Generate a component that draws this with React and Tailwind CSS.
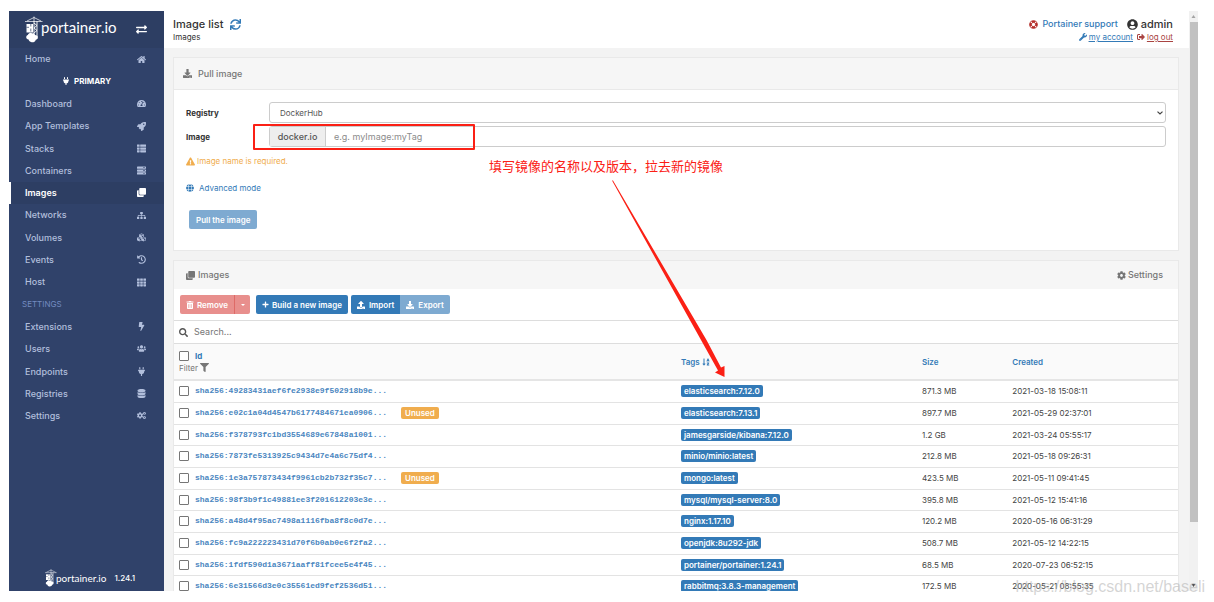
import React, { useState } from 'react';
import {
  FaBolt, FaClone, FaCog, FaCogs, FaCubes, FaDatabase, FaDownload, FaExchangeAlt,
  FaExclamationTriangle, FaFilter, FaGlobe, FaHistory, FaHome, FaLifeRing, FaPlug, FaPlus,
  FaRocket, FaSearch, FaServer, FaSignOutAlt, FaSitemap, FaSortAlphaDown, FaSync,
  FaTachometerAlt, FaTh, FaThList, FaTrashAlt, FaUpload, FaUserCircle, FaUsers, FaWrench,
} from 'react-icons/fa';

const MENU = [
  { label: 'Home', icon: FaHome },
  { label: 'PRIMARY', type: 'endpoint' },
  { label: 'Dashboard', icon: FaTachometerAlt },
  { label: 'App Templates', icon: FaRocket },
  { label: 'Stacks', icon: FaThList },
  { label: 'Containers', icon: FaServer },
  { label: 'Images', icon: FaClone, active: true },
  { label: 'Networks', icon: FaSitemap },
  { label: 'Volumes', icon: FaCubes },
  { label: 'Events', icon: FaHistory },
  { label: 'Host', icon: FaTh },
  { label: 'SETTINGS', type: 'title' },
  { label: 'Extensions', icon: FaBolt },
  { label: 'Users', icon: FaUsers },
  { label: 'Endpoints', icon: FaPlug },
  { label: 'Registries', icon: FaDatabase },
  { label: 'Settings', icon: FaCogs },
];

const IMAGES = [
  { id: 'sha256:49283431aef6fe2938e9f502918b9e...', tag: 'elasticsearch:7.12.0', size: '871.3 MB', created: '2021-03-18 15:08:11' },
  { id: 'sha256:e02c1a04d4547b6177484671ea0906...', tag: 'elasticsearch:7.13.1', size: '897.7 MB', created: '2021-05-29 02:37:01', unused: true },
  { id: 'sha256:f378793fc1bd3554689e67848a1001...', tag: 'jamesgarside/kibana:7.12.0', size: '1.2 GB', created: '2021-03-24 05:55:17' },
  { id: 'sha256:7873fe5313925c9434d7e4a6c75df4...', tag: 'minio/minio:latest', size: '212.8 MB', created: '2021-05-18 09:26:31' },
  { id: 'sha256:1e3a757873434f9961cb2b732f35c7...', tag: 'mongo:latest', size: '423.5 MB', created: '2021-05-11 09:41:45', unused: true },
  { id: 'sha256:98f3b9f1c49881ee3f201612203e3e...', tag: 'mysql/mysql-server:8.0', size: '395.8 MB', created: '2021-05-12 15:41:16' },
  { id: 'sha256:a48d4f95ac7498a1116fba8f8c0d7e...', tag: 'nginx:1.17.10', size: '120.2 MB', created: '2020-05-16 06:31:29' },
  { id: 'sha256:fc9a222223431d70f6b0ab0e6f2fa2...', tag: 'openjdk:8u292-jdk', size: '508.7 MB', created: '2021-05-12 14:22:15' },
  { id: 'sha256:1fdf590d1a3671aaff81fcee5e4f45...', tag: 'portainer/portainer:1.24.1', size: '68.5 MB', created: '2020-07-23 06:52:15' },
  { id: 'sha256:6e31566d3e0c35561ed9fef2536d51...', tag: 'rabbitmq:3.8.3-management', size: '172.5 MB', created: '2020-05-21 08:55:35' },
];

function CraneLogo({ className }) {
  return (
    <svg viewBox="0 0 18 27" className={className} fill="none" stroke="#fff" aria-hidden="true">
      <path d="M0 5.500h17.500M2 5 9 1.500 16 5M9 .5v5" strokeWidth=".7" />
      <path d="M9 5v14M12 5v16M9 7l3 2.500-3 2.500 3 2.500-3 2.500" strokeWidth=".9" />
      <path d="M1.500 8h6.500v8.500H1.500z" fill="#fff" stroke="none" />
      <path d="M5.800 8v2.500M1.500 11.300h2.500M5.800 12.500v3" stroke="#2d3e63" strokeWidth=".7" />
      <path
        d="M4 17.500c1-.9 2.400-.8 3.200 0 1.300-.6 2.600.2 2.700 1.400 1.900 0 3.100 1 3 2.500 0 1.300-1 2.100-2.100 2.300-.6 2-2.300 2.800-4.200 2.500-1.700-.1-2.700-1.100-3-2.600C2.100 23.400 1.200 22.500 1.200 21.300c0-1.200.7-2 1.700-2.200 0-.7.400-1.300 1.100-1.600z"
        fill="#fff"
        stroke="none"
      />
    </svg>
  );
}

function MenuItem({ item }) {
  if (item.type === 'endpoint') {
    return (
      <li className="flex items-center justify-center gap-1 text-[8px] font-bold text-white">
        <FaPlug className="h-2 w-auto" />
        {item.label}
      </li>
    );
  }
  if (item.type === 'title') {
    return <li className="flex items-center pl-[13px] text-[8px] text-[#738bc0]">{item.label}</li>;
  }
  const Icon = item.icon;
  return (
    <li className="flex">
      <a
        href="#menu"
        className={
          item.active
            ? 'flex flex-1 items-center justify-between border-l-2 border-white bg-[#2d3e63] pr-[17px] pl-[14px] font-semibold text-white'
            : 'flex flex-1 items-center justify-between border-l-2 border-transparent pr-[17px] pl-[14px] font-medium text-[#b2bfdc]'
        }
      >
        {item.label}
        <span className="flex w-3 justify-center">
          <Icon className="h-[9px] w-auto" />
        </span>
      </a>
    </li>
  );
}

function Sidebar() {
  return (
    <aside className="flex w-[155px] shrink-0 flex-col bg-[#30426a]">
      <div className="flex h-[37px] shrink-0 items-center bg-[#2d3e63] pr-[17px] pl-4">
        <CraneLogo className="h-[27px] w-[18px]" />
        <span className="-ml-[2px] flex-1 pb-[6px] font-['Lato',sans-serif] text-[15px] leading-5 text-white">portainer.io</span>
        <button type="button" aria-label="Toggle sidebar" className="text-white">
          <FaExchangeAlt className="size-[11px]" />
        </button>
      </div>
      <ul className="grid h-[379px] shrink-0 auto-rows-fr text-[9px]">
        {MENU.map((item) => (
          <MenuItem key={item.label} item={item} />
        ))}
      </ul>
      <div className="mt-auto flex items-center pb-1 pl-9 text-white">
        <CraneLogo className="h-[18px] w-3" />
        <span className="-ml-px font-['Lato',sans-serif] text-[10px]">portainer.io</span>
        <span className="ml-2 text-[8px] font-medium">1.24.1</span>
      </div>
    </aside>
  );
}

function Header() {
  return (
    <header className="flex h-[37px] shrink-0 justify-between bg-white pt-[6px] pr-4 pl-[9px]">
      <div>
        <h1 className="flex items-center gap-[7px] text-[11px] leading-[14px] font-medium text-[#333]">
          Image list
          <a href="#refresh" aria-label="Refresh" className="text-[#337ab7]">
            <FaSync className="size-[11px]" />
          </a>
        </h1>
        <p className="text-[8px] leading-3 text-[#333]">Images</p>
      </div>
      <div className="flex flex-col items-end">
        <div className="flex items-center gap-[9px] leading-[14px]">
          <a href="#support" className="flex items-center gap-1 text-[9px] font-medium text-[#337ab7]">
            <FaLifeRing className="size-[9px] text-[#b5302c]" />
            Portainer support
          </a>
          <span className="flex items-center gap-[3px] text-[11px] font-medium text-[#333]">
            <FaUserCircle className="size-[11px]" />
            admin
          </span>
        </div>
        <div className="flex gap-1 text-[8px] leading-3 underline">
          <a href="#account" className="flex items-center gap-[2px] text-[#337ab7]">
            <FaWrench className="size-[8px]" />
            my account
          </a>
          <a href="#logout" className="flex items-center gap-[2px] text-[#a94442]">
            <FaSignOutAlt className="size-[8px]" />
            log out
          </a>
        </div>
      </div>
    </header>
  );
}

function PullImage() {
  const [image, setImage] = useState('');

  return (
    <section className="shrink-0 border border-[#e9e9e9] bg-white">
      <h2 className="flex h-8 items-center gap-[6px] border-b border-[#e9e9e9] bg-[#f6f6f6] pl-[9px] text-[9px] font-medium text-[#767676]">
        <FaDownload className="size-[9px]" />
        Pull image
      </h2>
      <form className="px-3 pt-3 pb-[21px] text-[8px]">
        <div className="flex items-center">
          <label htmlFor="registry" className="w-[83px] font-bold text-[#333]">
            Registry
          </label>
          <div className="relative flex-1">
            <select
              id="registry"
              className="h-[21px] w-full appearance-none rounded-[3px] border border-[#ccc] bg-white px-[10px] text-[#555]"
            >
              <option>DockerHub</option>
            </select>
            <svg viewBox="0 0 6 4" className="pointer-events-none absolute top-[9px] right-[3px] h-1 w-[6px]" fill="none" stroke="#444">
              <path d="M.5.6 3 3 5.500.6" strokeWidth="1.200" />
            </svg>
          </div>
        </div>
        <div className="relative mt-[3px] flex items-center">
          <label htmlFor="image" className="w-[83px] font-bold text-[#333]">
            Image
          </label>
          <div className="flex h-[21px] flex-1 rounded-[3px] border border-[#ccc] text-[9px]">
            <span className="flex w-14 items-center justify-center border-r border-[#ccc] bg-[#eee] font-medium text-[#555]">
              docker.io
            </span>
            <input
              id="image"
              type="text"
              value={image}
              onChange={(e) => setImage(e.target.value)}
              placeholder="e.g. myImage:myTag"
              className="flex-1 px-2 text-[#555] outline-none placeholder:text-[#8c8c8c]"
            />
          </div>
          {/* Highlight around the image field */}
          <div className="pointer-events-none absolute -top-[2px] left-[67px] h-[26px] w-[222px] rounded-[1px] border-2 border-[#fb2015]" />
        </div>
        <p className="mt-2 flex items-center gap-[2px] leading-3 text-[#f0ad4e]">
          <FaExclamationTriangle className="size-[9px]" />
          Image name is required.
        </p>
        <a href="#advanced" className="mt-[15px] flex items-center gap-[5px] leading-3 text-[#337ab7]">
          <FaGlobe className="size-[8px]" />
          Advanced mode
        </a>
        <button type="button" className="mt-4 ml-[3px] h-[19px] rounded-[2px] bg-[#7eaad1] px-[7px] font-semibold text-white">
          Pull the image
        </button>
      </form>
    </section>
  );
}

function Checkbox({ label }) {
  return (
    <input
      type="checkbox"
      aria-label={label}
      className="size-[10px] shrink-0 appearance-none rounded-[1px] border border-[#767676] bg-white checked:bg-[#337ab7]"
    />
  );
}

function Toolbar() {
  return (
    <div className="flex h-[31px] items-center gap-[6px] px-[6px] text-[8px] font-semibold text-white">
      <div className="flex h-[19px] overflow-hidden rounded-[2px] bg-[#e88f8d]">
        <button type="button" className="flex items-center gap-[3px] border-r border-[#de6a67] px-[6px]">
          <FaTrashAlt className="size-[8px]" />
          Remove
        </button>
        <button type="button" aria-label="More remove options" className="flex w-[15px] items-center justify-center">
          <svg viewBox="0 0 4 2" className="h-[2px] w-1" fill="#fff">
            <path d="M0 0h4L2 2z" />
          </svg>
        </button>
      </div>
      <button type="button" className="flex h-[19px] items-center gap-[3px] rounded-[2px] bg-[#337ab7] px-[6px]">
        <FaPlus className="size-[7px]" />
        Build a new image
      </button>
      <div className="-ml-[3px] flex h-[19px] overflow-hidden rounded-[2px]">
        <button type="button" className="flex items-center gap-1 bg-[#337ab7] px-[6px]">
          <FaUpload className="size-[8px]" />
          Import
        </button>
        <button type="button" className="flex items-center gap-1 bg-[#7eaad1] px-[6px]">
          <FaDownload className="size-[8px]" />
          Export
        </button>
      </div>
    </div>
  );
}

function ImagesTable() {
  return (
    <table className="w-full table-fixed border-collapse text-left text-[8px] text-[#444]">
      <colgroup>
        <col className="w-[50%]" />
        <col className="w-[24%]" />
        <col className="w-[9%]" />
        <col className="w-[17%]" />
      </colgroup>
      <thead>
        <tr className="h-9 border-b-2 border-[#e5e5e5] bg-[#fafafa] text-[#337ab7]">
          <th className="px-[5px] py-0">
            <div className="flex items-center gap-[6px] leading-3">
              <Checkbox label="Select all images" />
              <a href="#id">Id</a>
            </div>
            <button type="button" className="flex items-center gap-[2px] leading-3 font-normal text-[#767676]">
              Filter
              <FaFilter className="size-[9px]" />
            </button>
          </th>
          <th className="px-[5px] py-0 font-semibold">
            <a href="#tags" className="flex items-center gap-[2px]">
              Tags
              <FaSortAlphaDown className="size-[8px]" />
            </a>
          </th>
          <th className="px-[5px] py-0 font-semibold">
            <a href="#size">Size</a>
          </th>
          <th className="px-[5px] py-0 font-semibold">
            <a href="#created">Created</a>
          </th>
        </tr>
      </thead>
      <tbody>
        {IMAGES.map((image) => (
          <tr key={image.id} className="h-[22px] border-b border-[#e3e3e3] nth-[3n]:h-[21px]">
            <td className="px-[5px] py-0">
              <div className="flex items-center gap-[6px]">
                <Checkbox label={image.id} />
                <a href="#image" className="font-['Liberation_Mono',monospace] font-bold text-[#4a86c0]">
                  {image.id}
                </a>
                {image.unused && (
                  <span className="ml-2 rounded-[2px] bg-[#f0ad4e] px-1 leading-3 font-semibold text-white">
                    Unused
                  </span>
                )}
              </div>
            </td>
            <td className="px-[5px] py-0">
              <span className="block w-fit rounded-[2px] bg-[#337ab7] px-[3px] leading-3 font-semibold text-white">
                {image.tag}
              </span>
            </td>
            <td className="px-[5px] py-0">{image.size}</td>
            <td className="px-[5px] py-0">{image.created}</td>
          </tr>
        ))}
      </tbody>
    </table>
  );
}

function ImageList() {
  return (
    <section className="mt-[9px] shrink-0 border border-[#e9e9e9] bg-white">
      <div className="flex h-7 items-center justify-between bg-[#f6f6f6] pr-[15px] pl-3 text-[9px] font-medium text-[#767676]">
        <h2 className="flex items-center gap-[3px]">
          <FaClone className="size-[9px]" />
          Images
        </h2>
        <button type="button" className="flex items-center gap-[2px]">
          <FaCog className="size-[9px]" />
          Settings
        </button>
      </div>
      <Toolbar />
      <div className="flex h-6 items-center gap-[6px] border-y border-[#ddd] pl-[5px] text-[9px] text-[#555]">
        <FaSearch className="size-[9px]" />
        <input type="text" aria-label="Search images" placeholder="Search..." className="flex-1 outline-none placeholder:text-[#767676]" />
      </div>
      <ImagesTable />
    </section>
  );
}

function Scrollbar() {
  return (
    <div className="flex w-[9px] shrink-0 flex-col items-center justify-between bg-[#f1f1f1]" aria-hidden="true">
      <svg viewBox="0 0 9 11" className="h-[11px] w-[9px]" fill="#a3a3a3">
        <path d="M2.500 7h4l-2-3z" />
      </svg>
      <div className="w-2 flex-[500] bg-[#c1c1c1]" />
      <div className="flex-[58]" />
      <svg viewBox="0 0 9 11" className="h-[11px] w-[9px]" fill="#505050">
        <path d="M2.500 4h4l-2 3z" />
      </svg>
    </div>
  );
}

export default function App() {
  return (
    <div className="relative flex h-screen overflow-hidden bg-white pt-[11px] pr-4 pb-[11px] pl-[9px] font-['Inter',sans-serif]">
      <Sidebar />
      <main className="flex min-w-0 flex-1 flex-col overflow-hidden bg-[#f3f3f3]">
        <Header />
        <div className="flex flex-col pt-[9px] pr-[10px] pl-[9px]">
          <PullImage />
          <ImageList />
        </div>
      </main>
      <Scrollbar />

      {/* Annotations over the page */}
      <p className="absolute top-[157px] left-[489px] font-['Noto_Sans_CJK_SC',sans-serif] text-[13px] leading-[18px] text-[#fb2015]">
        填写镜像的名称以及版本，拉去新的镜像
      </p>
      <svg viewBox="0 0 116 200" className="pointer-events-none absolute top-[180px] left-[611px] h-[200px] w-[116px]" fill="#fb2015">
        <path d="M1 .5h1L95.500 160 110 187.500l3.500-1.500v11l-9.500-4.500 3-2L90 160z" />
      </svg>
      <p className="absolute right-[9px] bottom-[7px] font-['Liberation_Sans',sans-serif] text-base leading-4 text-[#aaa]/50">
        https://blog.csdn.net/baseli
      </p>
    </div>
  );
}
